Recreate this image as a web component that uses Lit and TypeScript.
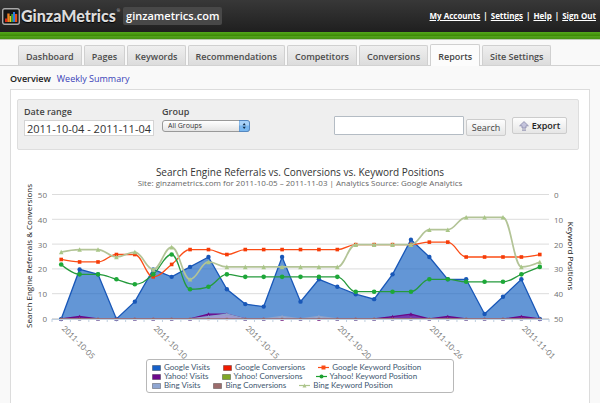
import { LitElement, html, svg, css } from "lit";
import { customElement } from "lit/decorators.js";
import { classMap } from "lit/directives/class-map.js";

type Shape = "circle" | "square" | "triangle";
type Point = { x: number; y: number };

const LEFT = 41;
const RIGHT = 538;
const TOP = 7;
const BOTTOM = 131;
const POINTS = 27;
const STEP = (RIGHT - LEFT) / POINTS;

const px = (i: number) => LEFT + STEP * (i + 0.5);
const py = (v: number) => BOTTOM - (v * (BOTTOM - TOP)) / 50;
const toPoints = (values: number[]): Point[] => values.map((v, i) => ({ x: px(i), y: py(v) }));

const sparse = (entries: Record<number, number>) =>
  Array.from({ length: POINTS }, (_, i) => entries[i] ?? 0);

const googleVisits = [0, 20, 18, 0, 7, 20, 17, 21, 25, 12, 6, 5, 25, 7, 16, 13, 10, 8, 18, 32, 25, 16, 16, 2, 9, 16, 0];
const yahooVisits = sparse({ 1: 1, 8: 2, 9: 2, 18: 1, 19: 2, 21: 1, 25: 1 });
const bingVisits = sparse({ 8: 1, 9: 2, 12: 1, 14: 1 });
const bingConversions = sparse({});
// Keyword positions run downwards from 0 on the right-hand axis.
const googlePosition = [26, 27, 27, 24, 24, 33, 28, 22, 22, 24, 22, 22, 22, 22, 22, 22, 20, 20, 20, 20, 19, 19, 25, 25, 25, 25, 24];
const yahooPosition = [28, 32, 32, 34, 36, 32, 24, 38, 37, 32, 33, 33, 33, 33, 33, 33, 39, 39, 39, 39, 34, 34, 35, 35, 35, 32, 29];
const bingPosition = [23, 22, 22, 25, 23, 30, 21, 34, 27, 29, 29, 29, 29, 29, 29, 29, 20, 20, 20, 20, 14, 14, 9, 9, 9, 29, 27];

const linePath = (pts: Point[]) => pts.map((p, i) => `${i ? "L" : "M"}${p.x} ${p.y}`).join("");
const areaPath = (pts: Point[]) => `${linePath(pts)}L${pts[pts.length - 1].x} ${BOTTOM}L${pts[0].x} ${BOTTOM}Z`;

// Smooth curve whose control points never overshoot the neighbouring values.
function splinePath(pts: Point[]): string {
  let d = `M${pts[0].x} ${pts[0].y}`;
  let carry = pts[0];
  for (let i = 1; i < pts.length; i++) {
    const prev = pts[i - 1];
    const cur = pts[i];
    const next = pts[i + 1];
    let inn = cur;
    let out = cur;
    if (next) {
      const lx = (1.5 * cur.x + prev.x) / 2.5;
      const rx = (1.5 * cur.x + next.x) / 2.5;
      let ly = (1.5 * cur.y + prev.y) / 2.5;
      let ry = (1.5 * cur.y + next.y) / 2.5;
      const fix = ((ry - ly) * (rx - cur.x)) / (rx - lx) + cur.y - ry;
      ly += fix;
      ry += fix;
      const hiL = Math.max(prev.y, cur.y);
      const loL = Math.min(prev.y, cur.y);
      if (ly > hiL) { ly = hiL; ry = 2 * cur.y - ly; }
      else if (ly < loL) { ly = loL; ry = 2 * cur.y - ly; }
      const hiR = Math.max(next.y, cur.y);
      const loR = Math.min(next.y, cur.y);
      if (ry > hiR) { ry = hiR; ly = 2 * cur.y - ry; }
      else if (ry < loR) { ry = loR; ly = 2 * cur.y - ry; }
      inn = { x: lx, y: ly };
      out = { x: rx, y: ry };
    }
    d += `C${carry.x} ${carry.y} ${inn.x} ${inn.y} ${cur.x} ${cur.y}`;
    carry = out;
  }
  return d;
}

function marker(shape: Shape, p: Point, fill: string, r: number) {
  if (shape === "circle") return svg`<circle cx=${p.x} cy=${p.y} r=${r} fill=${fill} />`;
  if (shape === "square") return svg`<rect x=${p.x - r} y=${p.y - r} width=${2 * r} height=${2 * r} fill=${fill} />`;
  return svg`<path d=${`M${p.x} ${p.y - r}L${p.x + r} ${p.y + r}L${p.x - r} ${p.y + r}Z`} fill=${fill} />`;
}

@customElement("metrics-chart")
export class MetricsChart extends LitElement {
  static styles = css`
    :host { display: block; }
    .plot { display: block; width: 100%; height: auto; overflow: visible; font-family: "Open Sans", "Noto Sans", sans-serif; }
    .grid { stroke: #dcdcdc; stroke-width: 1; }
    .axis { stroke: #c0d0e0; stroke-width: 1; }
    .tick { font-size: 8px; fill: #707070; }
    .date { font-size: 8px; fill: #808080; font-family: Lato, sans-serif; }
    .name { font-size: 8px; fill: #111; text-anchor: middle; }
    .end { text-anchor: end; }
    .line { fill: none; stroke-width: 1.3; }
    .soft { stroke-width: 1.7; }
  `;

  private area(values: number[], stroke: string, fill: string, shape: Shape, r: number) {
    const pts = toPoints(values);
    return svg`
      <path d=${areaPath(pts)} fill=${fill} fill-opacity="0.7" />
      <path class="line" d=${linePath(pts)} stroke=${stroke} />
      ${pts.map((p) => marker(shape, p, stroke, r))}`;
  }

  private spline(positions: number[], color: string, shape: Shape, r: number, dot = color) {
    const pts = toPoints(positions.map((v) => 50 - v));
    return svg`
      <path class=${shape === "triangle" ? "line soft" : "line"} d=${splinePath(pts)} stroke=${color} />
      ${pts.map((p) => marker(shape, p, dot, r))}`;
  }

  render() {
    const levels = [0, 10, 20, 30, 40, 50];
    const dates: [number, string][] = [
      [0, "2011-10-05"], [5, "2011-10-10"], [10, "2011-10-15"],
      [15, "2011-10-20"], [20, "2011-10-26"], [25, "2011-11-01"],
    ];
    return html`
      <svg class="plot" viewBox="0 0 578 171" role="img" aria-label="Referrals, conversions and keyword positions by day">
        ${levels.map((v) => svg`
          <line class="grid" x1=${LEFT} x2=${RIGHT} y1=${py(v) - 0.5} y2=${py(v) - 0.5} />
          <text class="tick end" x="36" y=${py(v) + 3}>${v}</text>
          <text class="tick" x="543" y=${py(v) + 3}>${50 - v}</text>`)}
        ${this.area(googleVisits, "#1857b8", "#2169c4", "circle", 2.2)}
        ${this.area(yahooVisits, "#6a0888", "#7b0fa0", "triangle", 1.8)}
        ${this.area(bingVisits, "#8fa3cc", "#b4c3e0", "triangle", 1.8)}
        ${this.area(bingConversions, "#9c6b6b", "#a87878", "square", 1.2)}
        ${this.spline(googlePosition, "#fb4d16", "square", 1.8, "#f63c08")}
        ${this.spline(yahooPosition, "#259a3c", "circle", 2.3, "#1da838")}
        ${this.spline(bingPosition, "#b3c497", "triangle", 2.3, "#a9c687")}
        <line class="axis" x1=${LEFT} x2=${RIGHT} y1=${BOTTOM + 0.5} y2=${BOTTOM + 0.5} />
        ${Array.from({ length: POINTS + 1 }, (_, i) => svg`
          <line class="axis" x1=${LEFT + i * STEP} x2=${LEFT + i * STEP} y1=${BOTTOM} y2=${BOTTOM + 3} />`)}
        ${dates.map(([i, label]) => svg`
          <text class="date" transform=${`translate(${px(i)} ${BOTTOM + 10}) rotate(45)`}>${label}</text>`)}
        <text class="name" transform="translate(21 68) rotate(-90)">Search Engine Referrals &amp; Conversions</text>
        <text class="name" transform="translate(557 68) rotate(90)">Keyword Positions</text>
      </svg>`;
  }
}

@customElement("chart-legend")
export class ChartLegend extends LitElement {
  static styles = css`
    :host { display: block; }
    .box {
      box-sizing: border-box; width: 308px; margin: 0 auto; padding: 3px 5px 2px;
      border: 1px solid #b8b8b8; border-radius: 3px; background: #fff;
    }
    .row { display: flex; gap: 13px; margin: 0; padding: 0; list-style: none; }
    .item {
      display: flex; align-items: center; gap: 3px; color: #3e576f; white-space: nowrap;
      font-family: Lato, sans-serif; font-size: 8px; line-height: 9px;
    }
    .swatch { width: 9px; height: 6px; }
    .mark { width: 11px; height: 7px; }
  `;

  private swatch(label: string, color: string) {
    return html`<li class="item">
      <svg class="swatch" viewBox="0 0 9 6" aria-hidden="true">
        <rect x="0.5" y="0.5" width="8" height="5" fill=${color} stroke="#000" stroke-opacity="0.3" />
      </svg>${label}</li>`;
  }

  private mark(label: string, color: string, shape: Shape) {
    return html`<li class="item">
      <svg class="mark" viewBox="0 0 11 7" aria-hidden="true">
        <path d="M0 3.5H11" stroke=${color} stroke-width="1.2" />
        ${marker(shape, { x: 5.5, y: 3.5 }, color, 2)}
      </svg>${label}</li>`;
  }

  render() {
    return html`<div class="box">
      <ul class="row">
        ${this.swatch("Google Visits", "#1560c8")}${this.swatch("Google Conversions", "#f01a00")}
        ${this.mark("Google Keyword Position", "#fb4d16", "square")}
      </ul>
      <ul class="row">
        ${this.swatch("Yahoo! Visits", "#6d0a8c")}${this.swatch("Yahoo! Conversions", "#80a828")}
        ${this.mark("Yahoo! Keyword Position", "#1da030", "circle")}
      </ul>
      <ul class="row">
        ${this.swatch("Bing Visits", "#8fa6d2")}${this.swatch("Bing Conversions", "#9c6c6c")}
        ${this.mark("Bing Keyword Position", "#adc58c", "triangle")}
      </ul>
    </div>`;
  }
}

@customElement("app-root")
export class AppRoot extends LitElement {
  static styles = css`
    :host {
      display: flex; flex-direction: column; min-height: 100vh; background: #f9f9f9; color: #444;
      font-family: "Open Sans", "Noto Sans", sans-serif; font-size: 9px; line-height: 12px;
    }
    .top {
      display: flex; align-items: center; gap: 3px; height: 32px; padding: 0 4px 0 2px;
      background: linear-gradient(#383838, #1f1f1f);
    }
    .brand { display: flex; align-items: center; gap: 1px; color: #ddd; text-decoration: none; }
    .logo { width: 18px; height: 17px; }
    .word { font-family: Lato, sans-serif; font-weight: 900; font-size: 16px; line-height: 20px; text-shadow: 0 1px 1px #000; }
    .reg { font-size: 4px; line-height: 10px; align-self: flex-start; }
    .site {
      padding: 0 3px; border-radius: 2px; background: #484848; color: #fff;
      font-weight: 600; font-size: 11px; line-height: 18px;
    }
    .account { display: flex; gap: 3px; margin-left: auto; color: #fff; font-weight: 700; font-size: 8px; }
    .account a { color: #fff; }
    .band { height: 7px; background: linear-gradient(#54a81c, #3f8c08 50%, #56a51e 51%, #459212); border-bottom: 1px solid #bcc8b4; }
    .tabs { display: flex; align-items: flex-end; gap: 2px; height: 20px; margin-top: 5px; padding: 0 18px; border-bottom: 1px solid #d2d2d2; }
    .tab {
      box-sizing: border-box; height: 20px; padding: 0 7px; border: 1px solid #d0d0d0; border-bottom: 0;
      border-radius: 2px 2px 0 0; background: linear-gradient(#efefef, #dcdcdc); color: #4c4c4c;
      font-weight: 600; font-size: 9px; line-height: 21px; text-decoration: none; white-space: nowrap;
    }
    .tab.on { height: 22px; margin-bottom: -1px; background: #fcfcfc; color: #444; line-height: 23px; }
    .sub { display: flex; gap: 6px; padding: 7px 10px 4px; }
    .sub a { color: #3a42b8; text-decoration: none; }
    .sub .here { color: #222; font-weight: 600; }
    .panel { flex: 1; margin: 0 10px; padding: 9px 0 8px; border: 1px solid #dcdcdc; border-width: 1px 1px 0; background: #fff; }
    .filters {
      display: flex; align-items: flex-start; gap: 8px; box-sizing: border-box; height: 51px; margin: 0 10px 0 6px;
      padding: 6px 11px 0 6px; border: 1px solid #dedede; border-radius: 2px; background: #efefef;
    }
    .field { display: flex; flex-direction: column; gap: 2px; font-weight: 600; }
    .dates, .query { box-sizing: border-box; margin: 0; font-family: inherit; color: #333; background: #fff; }
    .dates { width: 130px; height: 16px; padding: 0 1px; border: 1px solid #d4d4d4; font-size: 11px; text-align: center; }
    .pick { position: relative; display: block; width: 88px; height: 12px; }
    .groups {
      appearance: none; display: block; width: 100%; height: 100%; margin: 0; padding: 0 12px 0 5px; border: 1px solid #999;
      border-radius: 3px; background: linear-gradient(#fff, #e4e4e4); font-family: inherit; font-size: 7px; line-height: 10px; color: #333;
    }
    .cap { position: absolute; right: 0; top: 0; width: 11px; height: 12px; pointer-events: none; }
    .tools { display: flex; align-items: flex-start; margin-left: auto; padding-top: 10px; }
    .query { width: 130px; height: 19px; padding: 0 3px; border: 1px solid #b4bcc4; border-radius: 1px; font-size: 10px; }
    .btn {
      box-sizing: border-box; display: flex; align-items: center; justify-content: center; gap: 3px; height: 17px; margin: 0; padding: 0 5px;
      border: 1px solid #ccc; border-radius: 2px; background: linear-gradient(#fdfdfd, #e6e6e6);
      font-family: inherit; font-size: 9px; color: #444;
    }
    .go { width: 40px; margin: 3px 0 0 2px; }
    .export { width: 55px; margin: 1px 0 0 6px; font-weight: 600; color: #222; }
    .arrow { width: 10px; height: 10px; }
    .title { margin: 16px 0 0; font-size: 10px; line-height: 12px; font-weight: 400; text-align: center; color: #333; }
    .note { margin: 0; font-size: 8px; line-height: 10px; text-align: center; color: #666; }
  `;

  render() {
    const tabs = ["Dashboard", "Pages", "Keywords", "Recommendations", "Competitors", "Conversions", "Reports", "Site Settings"];
    return html`
      <header class="top">
        <a class="brand" href="#">
          <svg class="logo" viewBox="0 0 18 17" aria-hidden="true">
            <rect x="0.7" y="0.7" width="16.6" height="15.6" rx="2" fill="#151515" stroke="#aaa" stroke-width="1.4" />
            <path d="M3 10.5H5.3V14H3Z" fill="#e02818" />
            <path d="M5.3 5.5H7.6V14H5.3Z" fill="#f08020" />
            <path d="M7.6 8H9.3V14H7.6Z" fill="#f0c818" />
            <path d="M9.3 6H11V14H9.3Z" fill="#38a840" />
            <path d="M11 4H13V14H11Z" fill="#3078e0" />
            <path d="M13 6H15.2V14H13Z" fill="#e85018" />
          </svg>
          <span class="word">GinzaMetrics</span><span class="reg">®</span>
        </a>
        <span class="site">ginzametrics.com</span>
        <nav class="account">
          <a href="#">My Accounts</a>|<a href="#">Settings</a>|<a href="#">Help</a>|<a href="#">Sign Out</a>
        </nav>
      </header>
      <div class="band"></div>
      <nav class="tabs">
        ${tabs.map((t) => html`<a href="#" class=${classMap({ tab: true, on: t === "Reports" })}>${t}</a>`)}
      </nav>
      <nav class="sub"><a class="here" href="#">Overview</a><a href="#">Weekly Summary</a></nav>
      <main class="panel">
        <form class="filters">
          <label class="field">Date range
            <input class="dates" type="text" value="2011-10-04 - 2011-11-04" />
          </label>
          <label class="field">Group
            <span class="pick">
              <select class="groups"><option>All Groups</option></select>
              <svg class="cap" viewBox="0 0 11 12" aria-hidden="true">
                <path d="M0 0.5H8A2.5 2.5 0 0 1 10.5 3V9A2.5 2.5 0 0 1 8 11.5H0Z" fill="#7ab8f0" stroke="#5688c0" />
                <path d="M0.5 1H8A2 2 0 0 1 10 3V5.5H0.5Z" fill="#a8d2f8" />
                <path d="M5.2 3L6.8 5.2H3.6ZM5.2 9L6.8 6.8H3.6Z" fill="#14304c" />
              </svg>
            </span>
          </label>
          <div class="tools">
            <input class="query" type="search" aria-label="Search" />
            <button class="btn go" type="button">Search</button>
            <button class="btn export" type="button">
              <svg class="arrow" viewBox="0 0 10 10" aria-hidden="true">
                <path d="M5 0.6L9.4 4.8H7V7H3V4.8H0.6Z" fill="#c4c4dc" stroke="#8c8cac" stroke-width="0.8" />
                <path d="M3 8.2H7M3 9.5H7" stroke="#9c9cb8" stroke-width="0.8" />
              </svg>Export
            </button>
          </div>
        </form>
        <h2 class="title">Search Engine Referrals vs. Conversions vs. Keyword Positions</h2>
        <p class="note">Site: ginzametrics.com for 2011-10-05 – 2011-11-03 | Analytics Source: Google Analytics</p>
        <metrics-chart></metrics-chart>
        <chart-legend></chart-legend>
      </main>`;
  }
}
